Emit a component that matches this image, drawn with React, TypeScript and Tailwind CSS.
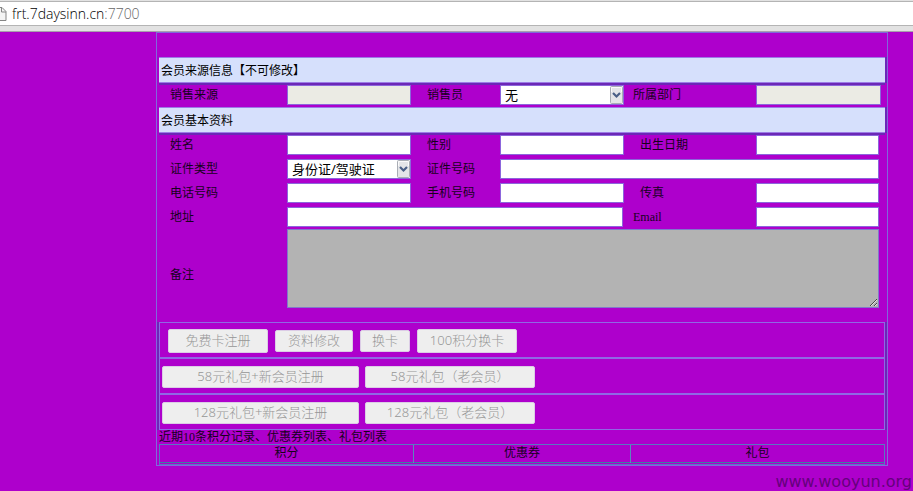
import type { ReactNode } from "react";

const inputClass =
  "block h-5 border border-[#8c66dc] bg-white px-1 text-[13px] text-black outline-none disabled:bg-[#ebebe4]";

const rowClass =
  "grid grid-cols-[117px_140px_73px_133px_123px_1fr] items-center pl-[11px] pr-[6px]";

function Band({ children }: { children: ReactNode }) {
  return (
    <h2 className="flex h-[26px] items-center border-y border-[#9c7ce6] bg-[#d6e0fc] px-[2px] pt-[2px] text-xs text-black shadow-[0_2px_0_#6c28b6,2px_0_0_#6c28b6]">
      {children}
    </h2>
  );
}

function Label({ id, indent, children }: { id: string; indent?: boolean; children: ReactNode }) {
  return (
    <label htmlFor={id} className={indent ? "pl-[7px] leading-5" : "leading-5"}>
      {children}
    </label>
  );
}

function Field({ id, className, disabled }: { id: string; className: string; disabled?: boolean }) {
  return <input id={id} type="text" disabled={disabled} className={`${inputClass} ${className}`} />;
}

function Select({ id, options }: { id: string; options: string[] }) {
  return (
    <div className="relative w-[124px]">
      <select
        id={id}
        className="block h-5 w-full appearance-none border border-[#8c66dc] bg-white px-1 text-[13px] leading-[18px] text-black outline-none"
      >
        {options.map((o) => (
          <option key={o}>{o}</option>
        ))}
      </select>
      <svg
        className="pointer-events-none absolute right-px top-px"
        width="13"
        height="18"
        viewBox="0 0 13 18"
        aria-hidden="true"
      >
        <rect x="0.5" y="0.5" width="12" height="17" rx="1" fill="#e4e5e8" stroke="#a9adb5" />
        <path d="M1.5 6V1.5H11.5V6" fill="none" stroke="#fafafb" />
        <path d="M3 7L6.500 10.500L10 7" fill="none" stroke="#4a5f86" strokeWidth="2.200" />
      </svg>
    </div>
  );
}

function Action({ className, children }: { className: string; children: ReactNode }) {
  return (
    <button
      type="button"
      disabled
      className={`flex items-center justify-center rounded-[2px] border border-[#dccce6] bg-[#eeeeee] text-[13px] font-light text-[#969696] ${className}`}
    >
      {children}
    </button>
  );
}

function ActionRow({ className, children }: { className: string; children: ReactNode }) {
  return (
    <div
      className={`flex h-9 items-center border border-[#9068e4] pt-[2px] shadow-[-2px_0_0_#7024b8,2px_0_0_#7024b8] ${className}`}
    >
      {children}
    </div>
  );
}

export default function App() {
  return (
    <div className="min-h-screen bg-[#ae00cc] font-['Noto_Sans','Noto_Sans_CJK_SC',sans-serif] text-xs text-[#16001c]">
      <header className="border-b border-[#a9a0ac] bg-[#e2e2e2] pb-[5px] pt-px">
        <div className="flex h-[25px] items-center gap-[5px] border-y border-[#b4b4b4] bg-white">
          <svg width="7" height="16" viewBox="0 0 7 16" aria-hidden="true">
            <path d="M0 1.5H2L6 5.500V14.500H0" fill="#f4f4f4" stroke="#858585" />
            <path d="M1.500 1.500V6H6" fill="none" stroke="#858585" />
          </svg>
          <span className="font-['Open_Sans','Noto_Sans',sans-serif] text-sm font-light text-black">
            frt.7daysinn.cn<span className="text-[#666666]">:7700</span>
          </span>
        </div>
      </header>

      <main className="ml-[156px] mr-[25px] border border-[#8068dc] px-[2px]">
        <form className="pt-6">
          <Band>会员来源信息【不可修改】</Band>
          <div className={`${rowClass} py-[2px]`}>
            <Label id="source">销售来源</Label>
            <Field id="source" className="w-[124px]" disabled />
            <Label id="seller">销售员</Label>
            <Select id="seller" options={["无"]} />
            <Label id="dept">所属部门</Label>
            <Field id="dept" className="w-[125px]" disabled />
          </div>
          <Band>会员基本资料</Band>
          <div className="space-y-1 pt-[2px]">
            <div className={rowClass}>
              <Label id="name">姓名</Label>
              <Field id="name" className="w-[124px]" />
              <Label id="gender">性别</Label>
              <Field id="gender" className="w-[124px]" />
              <Label id="birthday" indent>出生日期</Label>
              <Field id="birthday" className="w-full" />
            </div>
            <div className={rowClass}>
              <Label id="idtype">证件类型</Label>
              <Select id="idtype" options={["身份证/驾驶证"]} />
              <Label id="idnumber">证件号码</Label>
              <Field id="idnumber" className="col-span-3 w-full" />
            </div>
            <div className={rowClass}>
              <Label id="phone">电话号码</Label>
              <Field id="phone" className="w-[124px]" />
              <Label id="mobile">手机号码</Label>
              <Field id="mobile" className="w-[124px]" />
              <Label id="fax" indent>传真</Label>
              <Field id="fax" className="w-full" />
            </div>
            <div className={rowClass}>
              <Label id="address">地址</Label>
              <div className="col-span-3 pr-[10px]">
                <Field id="address" className="w-full" />
              </div>
              <label htmlFor="email" className="font-['Liberation_Serif',serif] leading-5">
                Email
              </label>
              <Field id="email" className="w-full" />
            </div>
          </div>
          <div className={`${rowClass} pb-[14px] pt-[2px]`}>
            <label htmlFor="remark" className="pt-3">备注</label>
            <textarea
              id="remark"
              className="col-span-5 block h-[79px] w-full border border-[#8078cc] bg-[#b3b3b3] p-1 outline-none"
            />
          </div>

          <ActionRow className="gap-[7px] pl-2">
            <Action className="h-6 w-[100px]">免费卡注册</Action>
            <Action className="h-[22px] w-[78px]">资料修改</Action>
            <Action className="h-[22px] w-[50px]">换卡</Action>
            <Action className="h-6 w-[100px]">100积分换卡</Action>
          </ActionRow>
          <ActionRow className="gap-[6px] pl-[2px]">
            <Action className="h-[22px] w-[197px]">58元礼包+新会员注册</Action>
            <Action className="h-[22px] w-[170px]">58元礼包（老会员）</Action>
          </ActionRow>
          <ActionRow className="gap-[6px] pl-[2px]">
            <Action className="h-[22px] w-[197px]">128元礼包+新会员注册</Action>
            <Action className="h-[22px] w-[170px]">128元礼包（老会员）</Action>
          </ActionRow>
        </form>

        <h3 className="font-['Liberation_Serif','Noto_Sans_CJK_SC',serif] leading-[14px]">
          近期10条积分记录、优惠券列表、礼包列表
        </h3>
        <div className="border border-[#5a78c0] pb-px">
          <table className="w-full table-fixed border-collapse text-center">
            <thead>
              <tr className="h-[17px] border-b border-[#3c7ca4] leading-4">
                <th className="w-[35%] border-r border-[#5a88bc] font-normal">积分</th>
                <th className="w-[30%] border-r border-[#5a88bc] font-normal">优惠券</th>
                <th className="w-[35%] font-normal">礼包</th>
              </tr>
            </thead>
          </table>
        </div>
      </main>
      <footer className="pr-px pt-[6px] text-right font-['DejaVu_Sans',sans-serif] text-base leading-5 text-[#65007c]">
        www.wooyun.org
      </footer>
    </div>
  );
}
